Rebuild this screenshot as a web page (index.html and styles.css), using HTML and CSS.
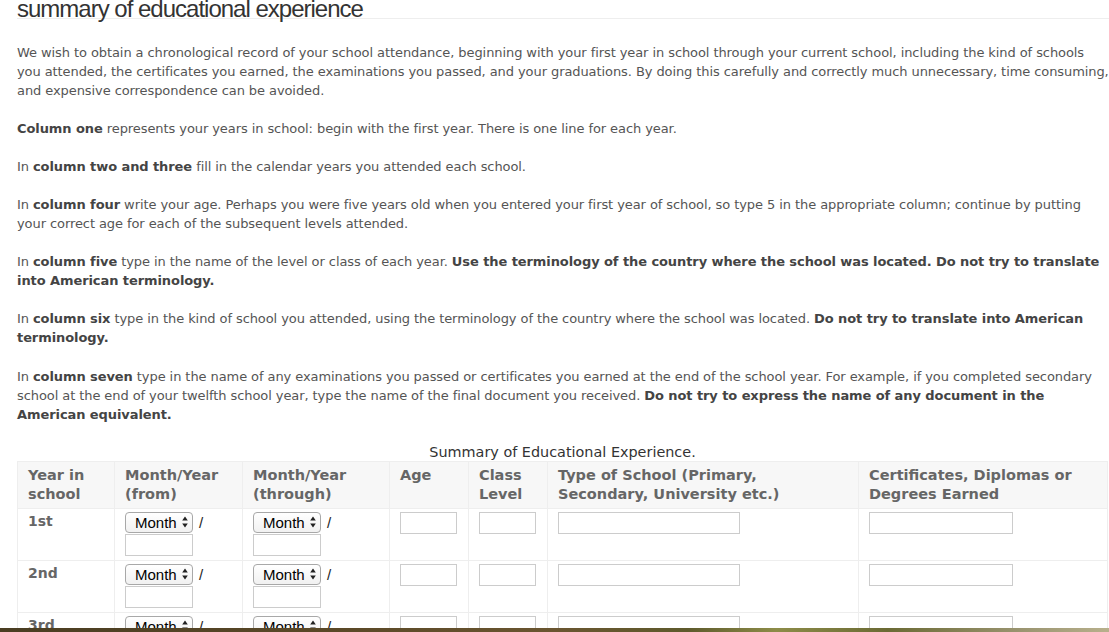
FILE: index.html
```html
<!DOCTYPE html>
<html lang="en">
<head>
<meta charset="utf-8">
<title>Summary of educational experience</title>
<link rel="stylesheet" href="styles.css">
</head>
<body>
<div class="page">
  <h1 class="title">summary of educational experience</h1>

  <p>We wish to obtain a chronological record of your school attendance, beginning with your first year in school through your current school, including the kind of schools you attended, the certificates you earned, the examinations you passed, and your graduations. By doing this carefully and correctly much unnecessary, time consuming, and expensive correspondence can be avoided.</p>

  <p><b>Column one</b> represents your years in school: begin with the first year. There is one line for each year.</p>

  <p>In <b>column two and three</b> fill in the calendar years you attended each school.</p>

  <p>In <b>column four</b> write your age. Perhaps you were five years old when you entered your first year of school, so type 5 in the appropriate column; continue by putting your correct age for each of the subsequent levels attended.</p>

  <p>In <b>column five</b> type in the name of the level or class of each year. <b>Use the terminology of the country where the school was located. Do not try to translate into American terminology.</b></p>

  <p>In <b>column six</b> type in the kind of school you attended, using the terminology of the country where the school was located. <b>Do not try to translate into American terminology.</b></p>

  <p>In <b>column seven</b> type in the name of any examinations you passed or certificates you earned at the end of the school year. For example, if you completed secondary school at the end of your twelfth school year, type the name of the final document you received. <b>Do not try to express the name of any document in the American equivalent.</b></p>

  <table class="edu">
    <caption>Summary of Educational Experience.</caption>
    <colgroup>
      <col class="c-yr"><col class="c-from"><col class="c-thru"><col class="c-age"><col class="c-lvl"><col class="c-type"><col class="c-cert">
    </colgroup>
    <thead>
      <tr>
        <th>Year in school</th>
        <th>Month/Year (from)</th>
        <th>Month/Year (through)</th>
        <th>Age</th>
        <th>Class Level</th>
        <th>Type of School (Primary, Secondary, University etc.)</th>
        <th>Certificates, Diplomas or Degrees Earned</th>
      </tr>
    </thead>
    <tbody>
      <tr>
        <td class="yr">1st</td>
        <td><div class="date"><span class="sel"><select><option>Month</option></select><svg viewBox="0 0 6 12" aria-hidden="true"><path d="M3 0.5 L5.8 4.6 L0.2 4.6 Z M3 11.5 L5.8 7.4 L0.2 7.4 Z"/></svg></span><span class="slash">/</span><input class="txt w-yr" type="text"></div></td>
        <td><div class="date"><span class="sel"><select><option>Month</option></select><svg viewBox="0 0 6 12" aria-hidden="true"><path d="M3 0.5 L5.8 4.6 L0.2 4.6 Z M3 11.5 L5.8 7.4 L0.2 7.4 Z"/></svg></span><span class="slash">/</span><input class="txt w-yr" type="text"></div></td>
        <td><input class="txt w-age" type="text"></td>
        <td><input class="txt w-age" type="text"></td>
        <td><input class="txt w-type" type="text"></td>
        <td><input class="txt w-cert" type="text"></td>
      </tr>
      <tr>
        <td class="yr">2nd</td>
        <td><div class="date"><span class="sel"><select><option>Month</option></select><svg viewBox="0 0 6 12" aria-hidden="true"><path d="M3 0.5 L5.8 4.6 L0.2 4.6 Z M3 11.5 L5.8 7.4 L0.2 7.4 Z"/></svg></span><span class="slash">/</span><input class="txt w-yr" type="text"></div></td>
        <td><div class="date"><span class="sel"><select><option>Month</option></select><svg viewBox="0 0 6 12" aria-hidden="true"><path d="M3 0.5 L5.8 4.6 L0.2 4.6 Z M3 11.5 L5.8 7.4 L0.2 7.4 Z"/></svg></span><span class="slash">/</span><input class="txt w-yr" type="text"></div></td>
        <td><input class="txt w-age" type="text"></td>
        <td><input class="txt w-age" type="text"></td>
        <td><input class="txt w-type" type="text"></td>
        <td><input class="txt w-cert" type="text"></td>
      </tr>
      <tr>
        <td class="yr">3rd</td>
        <td><div class="date"><span class="sel"><select><option>Month</option></select><svg viewBox="0 0 6 12" aria-hidden="true"><path d="M3 0.5 L5.8 4.6 L0.2 4.6 Z M3 11.5 L5.8 7.4 L0.2 7.4 Z"/></svg></span><span class="slash">/</span><input class="txt w-yr" type="text"></div></td>
        <td><div class="date"><span class="sel"><select><option>Month</option></select><svg viewBox="0 0 6 12" aria-hidden="true"><path d="M3 0.5 L5.8 4.6 L0.2 4.6 Z M3 11.5 L5.8 7.4 L0.2 7.4 Z"/></svg></span><span class="slash">/</span><input class="txt w-yr" type="text"></div></td>
        <td><input class="txt w-age" type="text"></td>
        <td><input class="txt w-age" type="text"></td>
        <td><input class="txt w-type" type="text"></td>
        <td><input class="txt w-cert" type="text"></td>
      </tr>
    </tbody>
  </table>
</div>
<div class="ground" aria-hidden="true"></div>
</body>
</html>
```

FILE: styles.css
```css
* { box-sizing: border-box; }

html, body {
  margin: 0;
  padding: 0;
  background: #fff;
}

body {
  font-family: "DejaVu Sans", Verdana, sans-serif;
  font-size: 13px;
  line-height: 19px;
  color: #555;
}

.page {
  width: 1092px;
  margin-left: 17px;
}

.title {
  font-family: "Liberation Sans", Arial, Helvetica, sans-serif;
  font-weight: normal;
  font-size: 24px;
  line-height: 18px;
  letter-spacing: -1px;
  color: #333;
  margin: 0 0 24px;
  padding: 0;
  border-bottom: 1px solid #eee;
}

p {
  margin: 0 0 19.1px;
  letter-spacing: -0.08px;
}

p b {
  color: #444;
}

.edu {
  width: 1090px;
  table-layout: fixed;
  border-collapse: collapse;
  border: 1px solid #e8e8e8;
}

.edu caption {
  font-size: 14.4px;
  line-height: 18px;
  color: #333;
  text-align: center;
}

.c-yr { width: 97px; }
.c-from { width: 128px; }
.c-thru { width: 147px; }
.c-age { width: 79px; }
.c-lvl { width: 79px; }
.c-type { width: 311px; }
.c-cert { width: 249px; }

.edu th,
.edu td {
  border: 1px solid #eee;
  text-align: left;
  vertical-align: top;
}

.edu th {
  padding: 4px 10px;
  background: #f7f7f7;
  color: #666;
  font-size: 14.5px;
  font-weight: bold;
}

.edu td {
  padding: 3px 10px 4px;
}

.edu td.yr {
  font-size: 14px;
  font-weight: bold;
  color: #666;
}

.date {
  display: flex;
  flex-wrap: wrap;
  align-items: center;
  column-gap: 6px;
  row-gap: 1px;
}

.sel {
  position: relative;
  display: block;
  width: 68px;
  height: 21px;
}

.sel select {
  -webkit-appearance: none;
  appearance: none;
  display: block;
  width: 68px;
  height: 21px;
  margin: 0;
  padding: 0 0 0 9px;
  border: 1px solid #a8a8a8;
  border-radius: 4px;
  background: linear-gradient(#ffffff, #f1f1f1);
  font-family: "Liberation Sans", Arial, Helvetica, sans-serif;
  font-size: 15px;
  color: #000;
}

.sel svg {
  position: absolute;
  right: 5px;
  top: 4px;
  width: 6px;
  height: 12px;
  fill: #222;
  pointer-events: none;
}

.slash {
  font-family: "Liberation Sans", Arial, Helvetica, sans-serif;
  font-size: 15px;
  color: #222;
}

.txt {
  display: block;
  height: 22px;
  margin: 0;
  padding: 0 4px;
  border: 1px solid #ccc;
  border-radius: 0;
  background: #fff;
}

.w-yr { width: 68px; }
.w-age { width: 57px; }
.w-type { width: 182px; }
.w-cert { width: 144px; }

.ground {
  position: fixed;
  left: 0;
  right: 0;
  bottom: 0;
  height: 4px;
  background: linear-gradient(90deg, #4a3d22 0%, #5a4827 30%, #6a5530 50%, #5e5a2c 62%, #8d8c48 70%, #6b6a34 80%, #9a9470 92%, #b8b08c 100%);
}
```
